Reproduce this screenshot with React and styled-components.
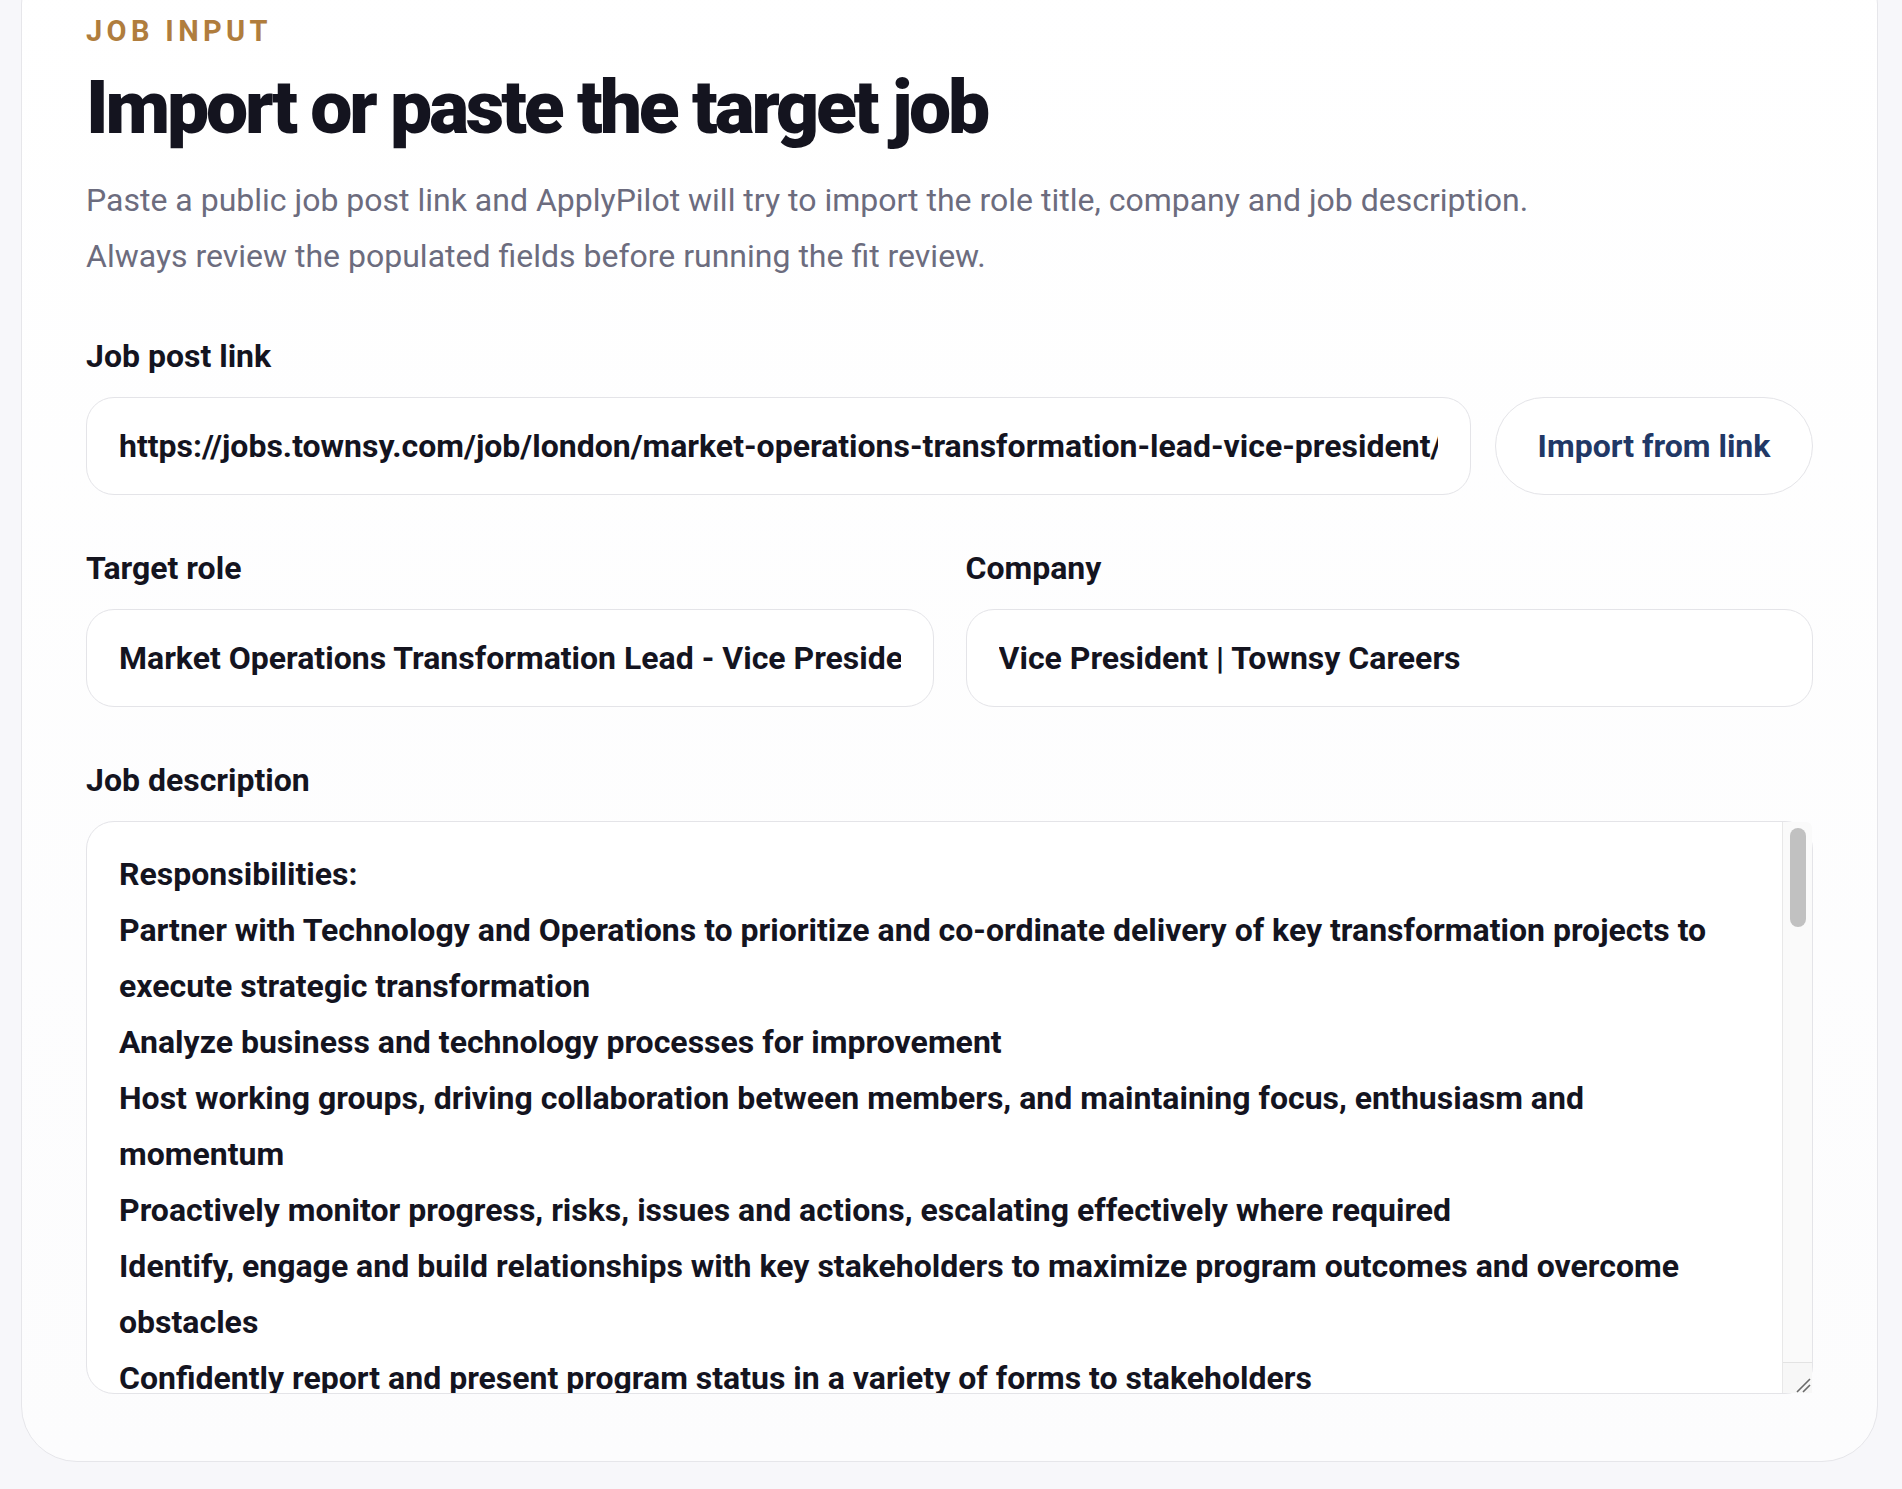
import styled, { createGlobalStyle } from "styled-components";

const GlobalStyle = createGlobalStyle`
  html, body {
    margin: 0;
    padding: 0;
  }
  body {
    background: #f7f7fa;
    font-family: Roboto, "Liberation Sans", sans-serif;
    color: #14141f;
    overflow: hidden;
  }
`;

const Page = styled.div`
  padding: 0 24px 80px 21px;
`;

const Card = styled.section`
  margin-top: -52px;
  padding: 64px 64px 67px;
  border: 1px solid #e6e6ea;
  border-radius: 56px;
  background: linear-gradient(180deg, #ffffff 0%, #fcfcfd 100%);
`;

const Eyebrow = styled.div`
  font-size: 29px;
  line-height: 36px;
  font-weight: 700;
  letter-spacing: 0.15em;
  text-transform: uppercase;
  color: #b07d3d;
`;

const Title = styled.h1`
  margin: 13px 0 0;
  font-size: 75px;
  line-height: 90px;
  font-weight: 900;
  letter-spacing: -0.042em;
  color: #14141f;
`;

const Lead = styled.p`
  margin: 20px 0 0;
  font-size: 32px;
  line-height: 56px;
  font-weight: 400;
  color: #6c6c7e;
`;

const Form = styled.div`
  margin-top: 54px;
  display: flex;
  flex-direction: column;
  gap: 55px;
`;

const Field = styled.div`
  display: flex;
  flex-direction: column;
  gap: 23px;
  min-width: 0;
`;

const Label = styled.label`
  font-size: 32px;
  line-height: 36px;
  font-weight: 700;
  color: #14141f;
`;

const LinkRow = styled.div`
  display: flex;
  gap: 24px;
`;

const TwoCols = styled.div`
  display: grid;
  grid-template-columns: 1fr 1fr;
  gap: 32px;
`;

const TextInput = styled.input`
  flex: ${(p) => (p.$grow ? "1 1 0" : "0 0 auto")};
  min-width: 0;
  box-sizing: border-box;
  height: 98px;
  padding: 0 32px;
  border: 1px solid #e4e4e8;
  border-radius: 28px;
  background: #ffffff;
  font-family: Roboto, "Liberation Sans", sans-serif;
  font-size: 32px;
  font-weight: 700;
  color: #14141f;
  outline: none;
`;

const GhostButton = styled.button`
  flex: 0 0 318px;
  box-sizing: border-box;
  height: 98px;
  border: 1px solid #e4e4e8;
  border-radius: 999px;
  background: #ffffff;
  font-family: Roboto, "Liberation Sans", sans-serif;
  font-size: 32px;
  font-weight: 700;
  color: #213866;
  cursor: pointer;
`;

const AreaWrap = styled.div`
  position: relative;
`;

const TextArea = styled.textarea`
  display: block;
  box-sizing: border-box;
  width: 100%;
  height: 573px;
  padding: 24px 62px 24px 32px;
  border: 1px solid #e4e4e8;
  border-radius: 28px;
  background: #ffffff;
  font-family: Roboto, "Liberation Sans", sans-serif;
  font-size: 32px;
  line-height: 56px;
  font-weight: 700;
  color: #14141f;
  outline: none;
  resize: none;
  overflow: hidden;
`;

/* the native scrollbar is hidden in the headless capture, so it is drawn */
const ScrollTrack = styled.div`
  position: absolute;
  top: 1px;
  right: 1px;
  bottom: 1px;
  width: 29px;
  display: flex;
  flex-direction: column;
  background: #fafafa;
  border-left: 1px solid #e8e8e8;
  border-top-right-radius: 6px;
`;

const ScrollGutter = styled.div`
  flex: 1;
  padding: 6px 6px 0 7px;
`;

const ScrollThumb = styled.div`
  height: 99px;
  border-radius: 8px;
  background: #c1c1c1;
`;

const Resizer = styled.div`
  height: 30px;
  border-top: 1px solid #e3e3e3;
  background: #f7f7f7;
  display: flex;
  align-items: flex-end;
  justify-content: flex-end;

  svg {
    display: block;
  }
`;

const description = [
  "Responsibilities:",
  "Partner with Technology and Operations to prioritize and co-ordinate delivery of key transformation projects to execute strategic transformation",
  "Analyze business and technology processes for improvement",
  "Host working groups, driving collaboration between members, and maintaining focus, enthusiasm and momentum",
  "Proactively monitor progress, risks, issues and actions, escalating effectively where required",
  "Identify, engage and build relationships with key stakeholders to maximize program outcomes and overcome obstacles",
  "Confidently report and present program status in a variety of forms to stakeholders",
  "Define and track key metrics to measure the success of transformation initiatives",
  "Support the design of target operating models across Markets Operations",
  "Drive consistent project governance, documentation and change management standards",
  "",
  "Qualifications:",
  "10+ years of relevant experience in operations, transformation or project management within financial services",
  "Strong knowledge of Markets products and the trade lifecycle",
  "Proven track record of delivering complex, cross-functional change programs",
  "Excellent written and verbal communication skills",
  "",
  "Education:",
  "Bachelor's degree/University degree or equivalent experience",
].join("\n");

export default function App() {
  return (
    <>
      <GlobalStyle />
      <Page>
        <Card>
          <Eyebrow>Job input</Eyebrow>
          <Title>Import or paste the target job</Title>
          <Lead>
            Paste a public job post link and ApplyPilot will try to import the
            role title, company and job description.
            <br />
            Always review the populated fields before running the fit review.
          </Lead>

          <Form>
            <Field>
              <Label htmlFor="job-link">Job post link</Label>
              <LinkRow>
                <TextInput
                  $grow
                  id="job-link"
                  readOnly
                  value="https://jobs.townsy.com/job/london/market-operations-transformation-lead-vice-president/"
                />
                <GhostButton type="button">Import from link</GhostButton>
              </LinkRow>
            </Field>

            <TwoCols>
              <Field>
                <Label htmlFor="target-role">Target role</Label>
                <TextInput
                  id="target-role"
                  readOnly
                  value="Market Operations Transformation Lead - Vice President"
                />
              </Field>
              <Field>
                <Label htmlFor="company">Company</Label>
                <TextInput
                  id="company"
                  readOnly
                  value="Vice President | Townsy Careers"
                />
              </Field>
            </TwoCols>

            <Field>
              <Label htmlFor="job-description">Job description</Label>
              <AreaWrap>
                <TextArea id="job-description" readOnly value={description} />
                <ScrollTrack>
                  <ScrollGutter>
                    <ScrollThumb />
                  </ScrollGutter>
                  <Resizer>
                    <svg width="29" height="29" viewBox="0 0 29 29">
                      <path
                        d="M14 28 L27 15 M20 28 L27 21"
                        stroke="#6a6a6a"
                        strokeWidth="1.6"
                        fill="none"
                      />
                    </svg>
                  </Resizer>
                </ScrollTrack>
              </AreaWrap>
            </Field>
          </Form>
        </Card>
      </Page>
    </>
  );
}
